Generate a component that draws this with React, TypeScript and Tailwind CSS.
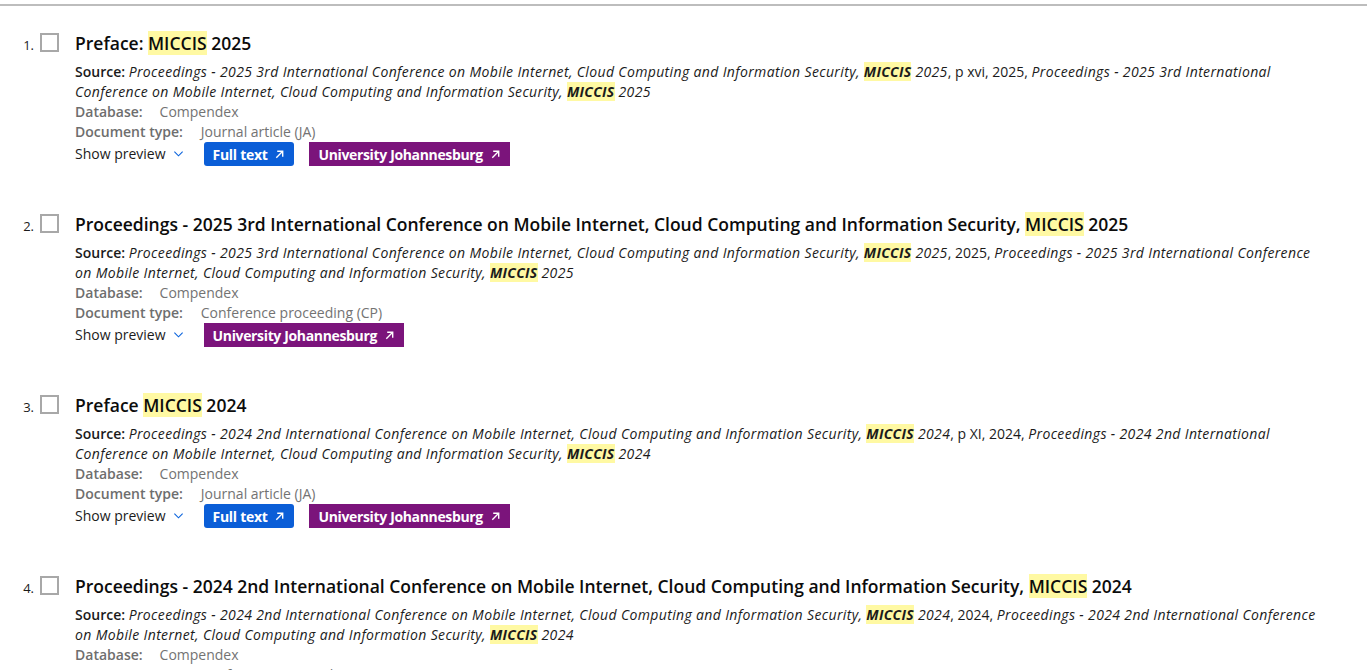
import { ReactNode } from "react"

type Item = {
   n: number
   title: ReactNode
   source: ReactNode
   docType: string
   fullText: boolean
}

function Hl({ children }: { children: ReactNode }) {
   return <span className="bg-[#fff9a3] font-bold italic tracking-[0.3px]">{children}</span>
}

function It({ children }: { children: ReactNode }) {
   return <i className="tracking-[0.36px]">{children}</i>
}

function Title({ children }: { children: ReactNode }) {
   return <span className="bg-[#fff9a3]">{children}</span>
}

function Arrow() {
   return (
      <svg width="11" height="11" viewBox="0 0 12 12" fill="none" stroke="currentColor" strokeWidth="1.5" className="ml-[7px]">
         <path d="M2.5 9.5 9.5 2.5M3.5 2.5h6v6" />
      </svg>
   )
}

const items: Item[] = [
   {
      n: 1,
      title: (
         <>
            Preface: <Title>MICCIS</Title> 2025
         </>
      ),
      source: (
         <>
            <It>Proceedings - 2025 3rd International Conference on Mobile Internet, Cloud Computing and Information Security, </It>
            <Hl>MICCIS</Hl>
            <It> 2025</It>, p xvi, 2025,{" "}
            <It>Proceedings - 2025 3rd International Conference on Mobile Internet, Cloud Computing and Information Security, </It>
            <Hl>MICCIS</Hl>
            <It> 2025</It>
         </>
      ),
      docType: "Journal article (JA)",
      fullText: true,
   },
   {
      n: 2,
      title: (
         <>
            Proceedings - 2025 3rd International Conference on Mobile Internet, Cloud Computing and Information Security,{" "}
            <Title>MICCIS</Title> 2025
         </>
      ),
      source: (
         <>
            <It>Proceedings - 2025 3rd International Conference on Mobile Internet, Cloud Computing and Information Security, </It>
            <Hl>MICCIS</Hl>
            <It> 2025</It>, 2025,{" "}
            <It>Proceedings - 2025 3rd International Conference on Mobile Internet, Cloud Computing and Information Security, </It>
            <Hl>MICCIS</Hl>
            <It> 2025</It>
         </>
      ),
      docType: "Conference proceeding (CP)",
      fullText: false,
   },
   {
      n: 3,
      title: (
         <>
            Preface <Title>MICCIS</Title> 2024
         </>
      ),
      source: (
         <>
            <It>Proceedings - 2024 2nd International Conference on Mobile Internet, Cloud Computing and Information Security, </It>
            <Hl>MICCIS</Hl>
            <It> 2024</It>, p XI, 2024,{" "}
            <It>Proceedings - 2024 2nd International Conference on Mobile Internet, Cloud Computing and Information Security, </It>
            <Hl>MICCIS</Hl>
            <It> 2024</It>
         </>
      ),
      docType: "Journal article (JA)",
      fullText: true,
   },
   {
      n: 4,
      title: (
         <>
            Proceedings - 2024 2nd International Conference on Mobile Internet, Cloud Computing and Information Security,{" "}
            <Title>MICCIS</Title> 2024
         </>
      ),
      source: (
         <>
            <It>Proceedings - 2024 2nd International Conference on Mobile Internet, Cloud Computing and Information Security, </It>
            <Hl>MICCIS</Hl>
            <It> 2024</It>, 2024,{" "}
            <It>Proceedings - 2024 2nd International Conference on Mobile Internet, Cloud Computing and Information Security, </It>
            <Hl>MICCIS</Hl>
            <It> 2024</It>
         </>
      ),
      docType: "Conference proceeding (CP)",
      fullText: false,
   },
]

function Result({ item }: { item: Item }) {
   return (
      <div className="flex h-[181px]">
         <div className="w-[75px] shrink-0 flex items-start pt-[3px]">
            <span className="w-[40px] text-right pr-[6px] text-[13px] text-[#1b1b1b] leading-[18px] pt-[3px]">{item.n}.</span>
            <span className="w-[19px] h-[19px] border-2 border-[#a8a8a8] bg-white"></span>
         </div>
         <div className="flex-1 pr-[40px]">
            <h3 className="text-[17.5px] leading-[26px] font-semibold text-[#0c0c0c] mb-[6px]">{item.title}</h3>
            <div className="text-[14px] leading-[20px] text-[#1b1b1b]">
               <span className="font-semibold">Source:</span> {item.source}
            </div>
            <div className="text-[14px] leading-[20px] flex">
               <span className="font-semibold text-[#6e6e6e] mr-[17px]">Database:</span>
               <span className="text-[#737373]">Compendex</span>
            </div>
            <div className="text-[14px] leading-[20px] flex">
               <span className="font-semibold text-[#6e6e6e] mr-[18px]">Document type:</span>
               <span className="text-[#737373]">{item.docType}</span>
            </div>
            <div className="flex items-center text-[14px]">
               <span className="text-[#1b1b1b] -mt-[2px]">Show preview</span>
               <svg width="11" height="11" viewBox="0 0 12 12" fill="none" stroke="#0b64dd" strokeWidth="1.2" className="ml-[7px] mr-[20px] -mt-[2px]">
                  <path d="M1.5 4 6 8.5 10.5 4" />
               </svg>
               {item.fullText && (
                  <span className="flex items-center h-[24px] px-[9px] bg-[#0b5ed7] text-white font-bold tracking-[-0.3px] rounded-[3px] mr-[15px]">
                     Full text
                     <Arrow />
                  </span>
               )}
               <span className="flex items-center h-[24px] px-[9px] bg-[#7b147b] text-white font-bold tracking-[-0.35px]">
                  University Johannesburg
                  <Arrow />
               </span>
            </div>
         </div>
      </div>
   )
}

export default function App() {
   return (
      <div className="bg-white min-h-screen font-['Open_Sans',sans-serif] overflow-hidden h-[670px]">
         <div className="h-[2px] bg-[#bdbdbd] mt-[4px]"></div>
         <div className="pt-[24px]">
            {items.map((it) => (
               <Result key={it.n} item={it} />
            ))}
         </div>
      </div>
   )
}
